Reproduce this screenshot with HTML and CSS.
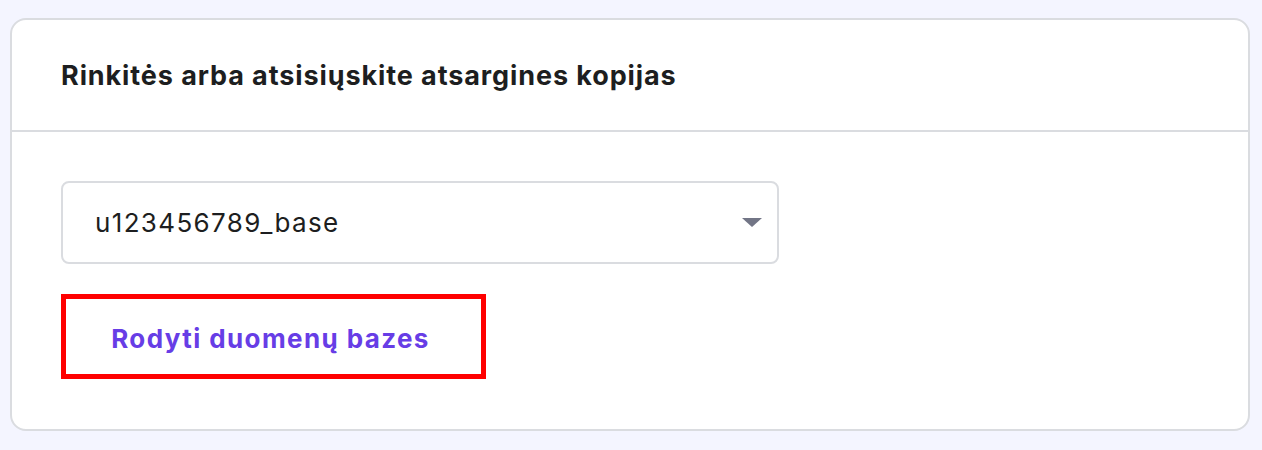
FILE: index.html
```html
<!DOCTYPE html>
<html lang="lt">
<head>
<meta charset="utf-8">
<link rel="stylesheet" href="styles.css">
</head>
<body>
<div class="page">
  <section class="card">
    <header class="card-header">
      <h2 class="title">Rinkitės arba atsisiųskite atsargines kopijas</h2>
    </header>
    <div class="card-body">
      <div class="select">
        <span class="select-value">u123456789_base</span>
        <svg class="caret" width="20" height="10" viewBox="0 0 20 10"><path d="M0 0 H20 L10 9 Z" fill="#727586"/></svg>
      </div>
      <div class="highlight">
        <button class="link-btn">Rodyti duomenų bazes</button>
      </div>
    </div>
  </section>
</div>
</body>
</html>
```

FILE: styles.css
```css
html, body {
  margin: 0;
  padding: 0;
  background: #f4f5ff;
}
body {
  font-family: "Inter", "DejaVu Sans", sans-serif;
  color: #1d1e20;
}
.page {
  padding: 18px 12px 18px 10px;
}
.card {
  background: #fff;
  border: 2px solid #dadce0;
  border-radius: 16px;
  overflow: hidden;
}
.card-header {
  height: 112px;
  display: flex;
  align-items: center;
  padding: 0 49px;
  border-bottom: 2px solid #dadce0;
  box-sizing: border-box;
}
.title {
  margin: 0;
  font-size: 27px;
  font-weight: 700;
  letter-spacing: 0.9px;
  color: #1d1e20;
}
.card-body {
  padding: 49px 49px 50px;
  display: flex;
  flex-direction: column;
  align-items: flex-start;
  gap: 30px;
}
.select {
  width: 718px;
  height: 83px;
  box-sizing: border-box;
  border: 2px solid #dadce0;
  border-radius: 8px;
  display: flex;
  align-items: center;
  justify-content: space-between;
  padding: 0 15px 0 32px;
}
.select-value {
  font-size: 26px;
  color: #1d1e20;
  letter-spacing: 1.35px;
}
.caret {
  display: block;
}
.highlight {
  border: 5px solid #ff0000;
  width: 425px;
  height: 85px;
  box-sizing: border-box;
  display: flex;
  align-items: center;
  justify-content: center;
  padding: 4px 6px 0 0;
}
.link-btn {
  background: none;
  border: 0;
  padding: 0;
  font-family: inherit;
  font-size: 26px;
  font-weight: 700;
  color: #673de6;
  letter-spacing: 1.4px;
  cursor: pointer;
}
```
